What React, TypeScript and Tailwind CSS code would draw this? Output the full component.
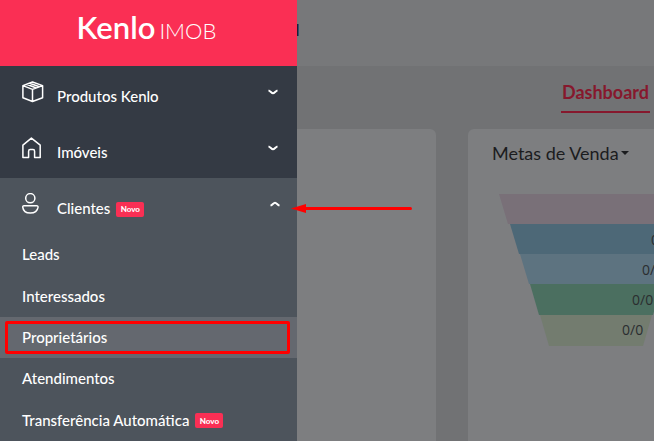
import type { ReactNode } from 'react';

function Badge() {
  return (
    <span className="flex h-[15px] w-7 items-center justify-center rounded-xs bg-[#fa2f54] text-[8px] font-black text-white">
      Novo
    </span>
  );
}

function Chevron({ up = false }: { up?: boolean }) {
  return (
    <svg width="12" height="6" viewBox="0 0 12 6" fill="none" stroke="#fff" strokeWidth="2">
      <path d={up ? 'M1.5 4.6 C3.5 4 4.5 1.7 6 1.7 S8.5 4 10.5 4.6' : 'M1.5 1.4 C3.5 2 4.5 4.3 6 4.3 S8.5 2 10.5 1.4'} />
    </svg>
  );
}

function BoxIcon() {
  return (
    <svg width="22" height="22" viewBox="0 0 22 22" fill="none" stroke="#fff" strokeWidth="1.5" strokeLinejoin="round">
      <path d="M10.5 1 L20.6 4.6 V16.8 L10.5 20.5 L0.9 16.8 V4.6 Z M0.9 4.6 L10.5 8.4 L20.6 4.6 M10.5 8.4 V20.5 M4.6 3.3 L14.4 7 M7.6 2.2 L17.4 5.8" />
    </svg>
  );
}

function HouseIcon() {
  return (
    <svg width="22" height="22" viewBox="0 0 22 22" fill="none" stroke="#fff" strokeWidth="1.5" strokeLinejoin="round">
      <path d="M0.9 20.5 V8.2 L9.4 1.1 L18.2 8.2 V20.5 H12.6 V14.2 Q12.6 12.6 11 12.6 H8.2 Q6.6 12.6 6.6 14.2 V20.5 Z" />
    </svg>
  );
}

function PersonIcon() {
  return (
    <svg width="22" height="22" viewBox="0 0 22 22" fill="none" stroke="#fff" strokeWidth="1.5">
      <circle cx="8.3" cy="5.2" r="4.6" />
      <path d="M2 12.7 H14.6 Q16.2 12.7 16 14.4 C15.4 18.2 12.2 20.1 8.3 20.1 S1.2 18.2 0.8 14.4 Q0.6 12.7 2 12.7 Z" />
    </svg>
  );
}

function MenuButton({ icon, label, open = false, badge = false }: { icon: ReactNode; label: string; open?: boolean; badge?: boolean }) {
  return (
    <button type="button" aria-expanded={open} className="flex h-14 w-full items-center pr-[18px] pl-[22px] text-left">
      <span className="mb-1 w-[35px]">{icon}</span>
      <span className="flex items-center gap-[6px] pt-[3px]">
        {label}
        {badge && <span className="pt-[3px]"><Badge /></span>}
      </span>
      <span className={open ? 'mr-[-2px] mb-1 ml-auto' : 'mb-1 ml-auto'}>
        <Chevron up={open} />
      </span>
    </button>
  );
}

const links = [
  { label: 'Leads' },
  { label: 'Interessados' },
  { label: 'Proprietários', current: true },
  { label: 'Atendimentos' },
  { label: 'Transferência Automática', badge: true },
];

function Sidebar() {
  return (
    <aside className="relative w-[297px] shrink-0 bg-[#343a44] text-[15px] leading-5 font-medium text-white">
      <div className="flex h-[66px] items-baseline justify-center gap-1 bg-[#fa2f54] pt-[9px] pr-1">
        <span className="text-[31px] leading-9 font-semibold">Kenlo</span>
        <span className="text-[22px] leading-9 font-light">IMOB</span>
      </div>
      <nav>
        <MenuButton icon={<BoxIcon />} label="Produtos Kenlo" />
        <MenuButton icon={<HouseIcon />} label="Imóveis" />
        <div className="bg-[#4d545c]">
          <MenuButton icon={<PersonIcon />} label="Clientes" open badge />
          <ul className="grid h-[207px] grid-rows-5">
            {links.map((l) => (
              <li key={l.label} className={l.current ? 'relative bg-[#64686f]' : ''}>
                <a href="#" className="flex h-full items-center gap-[6px] pb-px pl-[22px]">
                  {l.label}
                  {l.badge && <span className="pt-[2px]"><Badge /></span>}
                </a>
                {l.current && (
                  <span className="absolute top-1 right-[7px] bottom-1 left-[5px] rounded-xs border-3 border-[#ff0000]" />
                )}
              </li>
            ))}
          </ul>
        </div>
      </nav>
      <svg className="absolute top-[203px] left-[291px]" width="121" height="12" viewBox="0 0 121 12">
        <path d="M12 5.5 H119.5" stroke="#ff0000" strokeWidth="3" strokeLinecap="round" />
        <path d="M0 5.5 L15 1 V10 Z" fill="#ff0000" />
      </svg>
    </aside>
  );
}

const stages = [
  { points: '0,0 194,0 185,30 9,30', fill: '#797078', x: 163, y: 21, value: '0/0' },
  { points: '11,30 183,30 174,60 20,60', fill: '#4d6877', x: 152, y: 51, value: '0/0' },
  { points: '21,60 173,60 164,90 30,90', fill: '#5d7380', x: 143, y: 81, value: '0/0' },
  { points: '31,90 163,90 154,121 40,121', fill: '#4b6f60', x: 133, y: 111, value: '0/0' },
  { points: '41,121 153,121 144,152 50,152', fill: '#737c6f', x: 123, y: 141, value: '0/0' },
];

function Funnel() {
  return (
    <svg className="mt-[29px] ml-[7px] shrink-0" width="194" height="152" viewBox="0 0 194 152">
      {stages.map((s) => (
        <g key={s.y}>
          <polygon points={s.points} fill={s.fill} />
          <text x={s.x} y={s.y} fontSize="14" fontFamily="'Open Sans', sans-serif" fill="#2a2d2f">
            {s.value}
          </text>
        </g>
      ))}
    </svg>
  );
}

export default function App() {
  return (
    <div className="flex h-screen overflow-hidden bg-[#717274] font-['Lato',sans-serif]">
      <Sidebar />
      <main className="flex min-w-0 flex-1 flex-col">
        <header className="flex h-[66px] shrink-0 items-center bg-[#77787a] pb-[6px]">
          <span className="h-3 w-[2px] border-l border-[#1c1f33] bg-[#2f4f70]" />
        </header>
        <div className="flex h-[63px] shrink-0 justify-end pt-[14px] pr-1">
          <a href="#" className="h-[33px] border-b-2 border-[#86182d] px-px text-lg leading-6 font-bold text-[#86182d]">
            Dashboard
          </a>
        </div>
        <div className="flex flex-1">
          <section className="w-[139px] shrink-0 rounded-tr-md bg-[#7d7e80]" />
          <section className="ml-8 min-w-0 flex-1 overflow-hidden rounded-tl-md bg-[#7d7e80] pt-3 pl-6">
            <button type="button" className="flex items-center gap-[2px] text-lg leading-6 whitespace-nowrap text-[#1b1c1e]">
              Metas de Venda
              <svg width="8" height="4" viewBox="0 0 8 4">
                <path d="M0 0 H8 L4 4 Z" fill="#1b1c1e" />
              </svg>
            </button>
            <Funnel />
          </section>
        </div>
      </main>
    </div>
  );
}
